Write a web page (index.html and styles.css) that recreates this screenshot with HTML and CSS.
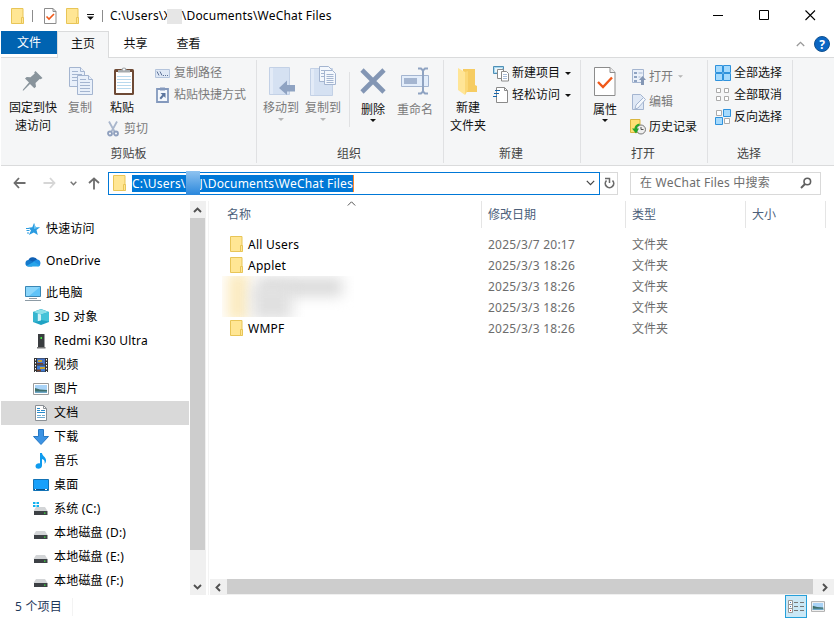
FILE: index.html
```html
<!DOCTYPE html>
<html lang="zh-CN">
<head>
    <meta charset="UTF-8">
    <title>WeChat Files</title>
    <link rel="stylesheet" href="styles.css">
</head>
<body>
    <!-- Shared icons -->
    <svg class="sprite" width="0" height="0">
        <symbol id="folder" viewBox="0 0 14 16">
            <path d="M.5.5h11.500v15H.5z" fill="#ffe694" stroke="#e8c557"/>
            <path d="M10.500 15.500V9.500h2v6z" fill="#ffe694" stroke="#e8c557"/>
        </symbol>
        <symbol id="drive" viewBox="0 0 16 16">
            <path d="M3 6h9l2.500 4h-14z" fill="#d3d5d7"/>
            <path d="M1 10h13.500v4H1z" fill="#3d4145"/>
            <path d="M11 11.500h1.500v1.200H11z" fill="#3fe03f"/>
        </symbol>
        <symbol id="picture" viewBox="0 0 16 12">
            <path d="M.5.5h15v11H.5z" fill="#fff" stroke="#9a9a9a"/>
            <path d="M2 2h12v8H2z" fill="#a9d3f7"/>
            <path d="M2 5l5 1.500 7 .5v3H2z" fill="#3f6f6b"/>
            <path d="M2 8.500h12V10H2z" fill="#6fa8c8"/>
        </symbol>
        <symbol id="check-page" viewBox="0 0 22 29">
            <path d="M.5.5h15.500l5 5v23H.5z" fill="#fff" stroke="#8c8c8c"/>
            <path d="M16 .5v5h5" fill="#eee" stroke="#8c8c8c"/>
            <path d="M4 15l5 5L18 10.500" fill="none" stroke="#f0591a" stroke-width="2.400"/>
        </symbol>
        <symbol id="down" viewBox="0 0 6 3"><path d="M0 0h6L3 3z" fill="currentColor"/></symbol>
    </svg>

    <div class="window">
        <header class="titlebar">
            <svg class="t-folder" width="14" height="16"><use href="#folder"/></svg>
            <i class="t-line"></i>
            <svg class="t-check" width="13" height="16" viewBox="0 0 13 16">
                <path d="M.5.5h8.500l3 3v12H.5z" fill="#fff" stroke="#8c8c8c"/>
                <path d="M9 .5v3h3" fill="none" stroke="#8c8c8c"/>
                <path d="M2.500 8.500l2.500 2.500 5-5" fill="none" stroke="#f0591a" stroke-width="1.600"/>
            </svg>
            <svg class="t-folder2" width="14" height="16"><use href="#folder"/></svg>
            <svg class="t-more" width="7" height="6" viewBox="0 0 7 6"><path d="M0 0h7v1H0zM0 2.500h7L3.500 6z" fill="#111"/></svg>
            <i class="t-line"></i>
            <span class="t-text">C:\Users\X<span class="mask"></span>\Documents\WeChat Files</span>
            <div class="win-buttons">
                <svg width="11" height="11" viewBox="0 0 11 11"><path d="M0 5.500h10" stroke="#000"/></svg>
                <svg width="11" height="11" viewBox="0 0 11 11"><path d="M.5.5h9v9H.5z" fill="none" stroke="#000"/></svg>
                <svg width="11" height="11" viewBox="0 0 11 11"><path d="M.5.5l9.500 9.500M10 .5L.5 10" stroke="#000" stroke-width="1.100"/></svg>
            </div>
        </header>

        <nav class="tabs">
            <span class="tab file">文件</span>
            <span class="tab active">主页</span>
            <span class="tab">共享</span>
            <span class="tab">查看</span>
            <svg class="collapse" width="9" height="6" viewBox="0 0 9 6"><path d="M.8 5L4.500 1.300 8.200 5" fill="none" stroke="#999" stroke-width="1.300"/></svg>
            <svg class="help" width="16" height="16" viewBox="0 0 16 16">
                <circle cx="8" cy="8" r="7.500" fill="#0b66c3" stroke="#12518f"/>
                <text x="8" y="12.500" text-anchor="middle" class="help-mark">?</text>
            </svg>
        </nav>

        <div class="ribbon">
            <section class="group clipboard">
                <div class="tools">
                    <div class="big pin">
                        <svg width="22" height="22" viewBox="0 0 22 22"><path d="M13.500 1l7 7-1.800 1.300-1-.4-4.200 4.200.5 3.600-1.700 1.500-4.300-4.300L2 20 .8 21 1 19.500l6-7-4-4 1.700-1.600 3.800.4 4.200-3.800-.5-1z" fill="#89949c"/></svg>
                        <span>固定到快<br>速访问</span>
                    </div>
                    <div class="big copy dim">
                        <svg width="26" height="30" viewBox="0 0 26 30" fill="#e9f0fa" stroke="#a4b5d0">
                            <path d="M1.500 1.500h11l4 4v15h-15z"/><path d="M12.500 1.500v4h4M4 8.500h10M4 11.500h10M4 14.500h10M4 5.500h6"/>
                            <path d="M9.500 9.500h11l4 4v15h-15z"/><path d="M20.500 9.500v4h4M12 16.500h10M12 19.500h10M12 22.500h10M12 25.500h10M12 13.500h6"/>
                        </svg>
                        <span>复制</span>
                    </div>
                    <div class="paste-col">
                        <div class="big paste">
                            <svg width="22" height="30" viewBox="0 0 22 30">
                                <rect x="1" y="3" width="20" height="26" rx="1.500" fill="#6e4a35"/>
                                <path d="M3 6h16v21H3z" fill="#fff"/>
                                <path d="M4 10.500h14M4 13.500h14M4 16.500h14M4 19.500h14M4 22.500h14" stroke="#b9d9ee"/>
                                <path d="M5 6.500V4h3.500a2.500 2.500 0 0 1 5 0H17v2.500z" fill="#a6abae"/><circle cx="11" cy="3.500" r="1" fill="#fff"/>
                            </svg>
                            <span>粘贴</span>
                        </div>
                        <div class="row cut dim">
                            <svg width="12" height="16" viewBox="0 0 12 16" fill="none" stroke="#8fa0be" stroke-width="1.800">
                                <path d="M2 .5l5.500 10M10 .5l-5.500 10" stroke="#a9b6cc"/><circle cx="3" cy="12.500" r="2"/><circle cx="9" cy="12.500" r="2"/>
                            </svg>
                            <span>剪切</span>
                        </div>
                    </div>
                    <div class="stack dim">
                        <div class="row">
                            <svg width="15" height="9" viewBox="0 0 15 9"><path d="M.5.5h14v8H.5z" fill="#dfe8f5" stroke="#b4c4dc"/><path d="M2 2.500l2 4M5 2.500l2 4M8 6.500h1M10 6.500h1M12 6.500h1" stroke="#5f7398"/></svg>
                            <span>复制路径</span>
                        </div>
                        <div class="row">
                            <svg width="15" height="16" viewBox="0 0 15 16"><path d="M2 2h11v13H2z" fill="#f4f8fd" stroke="#8499bd" stroke-width="1.800"/><path d="M5 .5h5v3H5z" fill="#8499bd"/><path d="M5.500 6H10.500v5L8.800 9.300 6 12.500 4.500 11l2.800-3.300z" fill="#5d769f"/></svg>
                            <span>粘贴快捷方式</span>
                        </div>
                    </div>
                </div>
                <div class="caption">剪贴板</div>
            </section>

            <section class="group organize">
                <div class="tools">
                    <div class="big dim move">
                        <svg width="28" height="30" viewBox="0 0 28 30"><path d="M2.500 1.500h20v27h-20z" fill="#d5e1f2" stroke="#c3d1e6"/><path d="M3 2h3v26H3z" fill="#e3ebf7"/><path d="M12 22l8-7.500V19h8v6.500h-8V29z" fill="#8fa3c2"/></svg>
                        <span>移动到</span>
                        <svg class="arrow" width="6" height="3"><use href="#down"/></svg>
                    </div>
                    <div class="big dim move">
                        <svg width="28" height="32" viewBox="0 0 28 32"><path d="M1.500 3.500h22v27h-22z" fill="#d5e1f2" stroke="#c3d1e6"/><path d="M2 4h3v26H2z" fill="#e3ebf7"/>
                            <g fill="#f4f8fd" stroke="#a4b5d0"><path d="M10.500 1.500h9l3 3v12h-12z"/><path d="M12 5.500h5M12 8.500h5M12 11.500h5"/><path d="M15.500 5.500h8l3 3v11h-11z"/><path d="M17.500 9.500h7M17.500 11.500h7M17.500 13.500h7M17.500 15.500h7M17.500 17.500h7"/></g></svg>
                        <span>复制到</span>
                        <svg class="arrow" width="6" height="3"><use href="#down"/></svg>
                    </div>
                    <i class="divider"></i>
                    <div class="big delete">
                        <svg width="28" height="28" viewBox="0 0 28 28"><path d="M3 3l22 22M25 3L3 25" stroke="#8396b4" stroke-width="4.600"/></svg>
                        <span>删除</span>
                        <svg class="arrow" width="6" height="3"><use href="#down"/></svg>
                    </div>
                    <div class="big dim rename">
                        <svg width="28" height="28" viewBox="0 0 28 28"><path d="M.5 8.500h27v11H.5z" fill="#e3edfa" stroke="#a4b5d0"/><path d="M3 11h13v6H3z" fill="#a4b5d0"/><path d="M17 1.500h3l2 2 2-2h3M17 26.500h3l2-2 2 2h3M22 3v22" fill="none" stroke="#8fa3c2" stroke-width="2"/></svg>
                        <span>重命名</span>
                    </div>
                </div>
                <div class="caption">组织</div>
            </section>

            <section class="group create">
                <div class="tools">
                    <div class="big newfolder">
                        <svg width="22" height="30" viewBox="0 0 22 30"><path d="M6 3h12v16l2 1v6H6z" fill="#f6cc62"/><path d="M1 2l7 4v23l-7-5z" fill="#ffe596"/><path d="M8 6l3-1v19l-3 5z" fill="#fbd877"/></svg>
                        <span>新建<br>文件夹</span>
                    </div>
                    <div class="stack">
                        <div class="row">
                            <svg width="16" height="17" viewBox="0 0 16 17"><path d="M.5 1.500h10v7H.5z" fill="#a9d8f0" stroke="#4f8fb5"/><path d="M2 3h7v4H2z" fill="#eaf6fb"/><path d="M4.500 4.500h6v9h-6z" fill="#fff" stroke="#8a8a8a"/><path d="M8.500 6.500h5l2 2v7.500h-7z" fill="#fff" stroke="#8a8a8a"/><path d="M10 9.500h4M10 11.500h4M10 13.500h4" stroke="#a9bdd9"/></svg>
                            <span>新建项目</span>
                            <svg class="side" width="6" height="3"><use href="#down"/></svg>
                        </div>
                        <div class="row">
                            <svg width="16" height="16" viewBox="0 0 16 16"><path d="M3.500.5h8l3 3v12h-11z" fill="#fff" stroke="#8a8a8a"/><path d="M11.500.5v3h3" fill="none" stroke="#8a8a8a"/><path d="M2 3.500h5M1 6.500h5M0 9.500h4" stroke="#1767ad" stroke-width="1.200"/></svg>
                            <span>轻松访问</span>
                            <svg class="side" width="6" height="3"><use href="#down"/></svg>
                        </div>
                    </div>
                </div>
                <div class="caption">新建</div>
            </section>

            <section class="group open">
                <div class="tools">
                    <div class="big props">
                        <svg width="22" height="29"><use href="#check-page"/></svg>
                        <span>属性</span>
                        <svg class="arrow" width="6" height="3"><use href="#down"/></svg>
                    </div>
                    <div class="stack">
                        <div class="row dim">
                            <svg width="16" height="16" viewBox="0 0 16 16"><path d="M2.500.5h11v13h-11z" fill="#eaf0f9" stroke="#a4b5d0"/><path d="M4 3h3v2H4zM4 7h3v2H4zM4 11h3v2H4z" fill="#8fa3c2"/><path d="M8.500 4h4M8.500 8h2" stroke="#a4b5d0"/><path d="M12.500 7l3.500 4h-2v5h-3v-5H9z" fill="#8396b4"/></svg>
                            <span>打开</span>
                            <svg class="side" width="5" height="3"><use href="#down"/></svg>
                        </div>
                        <div class="row dim">
                            <svg width="16" height="16" viewBox="0 0 16 16"><path d="M2.500.5h8l3 3v12h-11z" fill="#dfe8f5" stroke="#a4b5d0"/><path d="M5 15l1-4 7.500-7.500 2 2L8 14z" fill="#f4f8fd" stroke="#a4b5d0"/></svg>
                            <span>编辑</span>
                        </div>
                        <div class="row">
                            <svg width="16" height="17" viewBox="0 0 16 17"><path d="M.5 1.500h9.500v13H.5z" fill="#ffe073" stroke="#d9b640"/><circle cx="11" cy="11.500" r="4.500" fill="#eee" stroke="#777"/><path d="M11 9v2.500h2.500" fill="none" stroke="#555"/><path d="M9.500 5.500C6 6 4.500 8.500 4.500 10.500H2l4 5 3-5H7c0-1.800 1-2.500 2.500-3z" fill="#27a52b"/></svg>
                            <span>历史记录</span>
                        </div>
                    </div>
                </div>
                <div class="caption">打开</div>
            </section>

            <section class="group select">
                <div class="tools">
                    <div class="stack">
                        <div class="row">
                            <svg width="16" height="16" viewBox="0 0 16 16" fill="#a5dafd" stroke="#2f92dc"><path d="M.5.500h7v7H.5zM8.500.5h7v7h-7zM.5 8.500h7v7h-7zM8.500 8.500h7v7h-7z"/></svg>
                            <span>全部选择</span>
                        </div>
                        <div class="row">
                            <svg width="16" height="16" viewBox="0 0 16 16" fill="#fff" stroke="#ababab"><path d="M1.500 1.500h4v4h-4zM9.500 1.500h4v4h-4zM1.500 9.500h4v4h-4zM9.500 9.500h4v4h-4z"/></svg>
                            <span>全部取消</span>
                        </div>
                        <div class="row">
                            <svg width="16" height="16" viewBox="0 0 16 16"><path d="M1.500 1.500h5v5h-5zM9.500 9.500h5v5h-5z" fill="#fff" stroke="#ababab"/><path d="M8.500.5h7v7h-7zM.5 8.500h7v7h-7z" fill="#a5dafd" stroke="#2f92dc"/></svg>
                            <span>反向选择</span>
                        </div>
                    </div>
                </div>
                <div class="caption">选择</div>
            </section>
        </div>

        <div class="navbar">
            <svg class="back" width="13" height="12" viewBox="0 0 13 12"><path d="M6 1L1.500 6 6 11M1.500 6H12.500" fill="none" stroke="#6d6d6d" stroke-width="1.800"/></svg>
            <svg class="forward" width="13" height="12" viewBox="0 0 13 12"><path d="M7 1l4.500 5L7 11M11.500 6H.5" fill="none" stroke="#d6d6d6" stroke-width="1.800"/></svg>
            <svg class="recent" width="7" height="5" viewBox="0 0 7 5"><path d="M.7.7l2.800 3 2.800-3" fill="none" stroke="#777" stroke-width="1.500"/></svg>
            <svg class="up" width="12" height="13" viewBox="0 0 12 13"><path d="M1 6l5-4.500L11 6M6 1.500v11" fill="none" stroke="#6d6d6d" stroke-width="1.800"/></svg>
            <div class="address">
                <svg width="14" height="16"><use href="#folder"/></svg>
                <span class="path">C:\Users\<span class="mask"></span>J\Documents\WeChat Files</span>
                <svg class="drop" width="9" height="6" viewBox="0 0 9 6"><path d="M.8.8l3.700 3.900L8.200.8" fill="none" stroke="#444" stroke-width="1.200"/></svg>
            </div>
            <div class="refresh">
                <svg width="11" height="12" viewBox="0 0 11 12"><path d="M2.500 3.500A4.200 4.200 0 1 0 8.500 3.500" fill="none" stroke="#6a6a6a" stroke-width="1.700"/><path d="M1 1.500h4.500V6" fill="none" stroke="#6a6a6a" stroke-width="1.500"/></svg>
            </div>
            <div class="search">
                <span>在 WeChat Files 中搜索</span>
                <svg width="12" height="12" viewBox="0 0 12 12"><circle cx="7.300" cy="4.500" r="3.300" fill="none" stroke="#5f5f5f" stroke-width="1.600"/><path d="M5 7L1 11" stroke="#5f5f5f" stroke-width="2"/></svg>
            </div>
        </div>

        <div class="body">
            <aside class="tree">
                <div class="node root">
                    <svg width="16" height="16" viewBox="0 0 16 16"><path d="M9 2l1.600 4 4.400.3-3.500 2.700 1.300 5-4-2.500-5 2.500 2.200-4.500-2.500-2.700 3.800-.5z" fill="#2a9be0"/><path d="M9 2l1.600 4 4.400.3-6 1.700z" fill="#6cc4f2"/><path d="M1 7.500h3M1.500 9.500h3M2 12h2" stroke="#2a9be0"/></svg>
                    <span>快速访问</span>
                </div>
                <div class="node root">
                    <svg width="16" height="16" viewBox="0 0 16 16"><path d="M3 8a5.200 5.200 0 0 1 9.600-1L8 11z" fill="#0f5fb4"/><path d="M3.500 13.500a3.300 3.300 0 0 1 .5-6.600l6 2.600-3 4z" fill="#1479cc"/><path d="M8 8.500l4-2a3.600 3.600 0 0 1 1 7z" fill="#1f8fe4"/><path d="M1.500 12.700L9 8.800l6.200 3.700a3 3 0 0 1-2.400 1H3.500a4 4 0 0 1-2-.8z" fill="#28a5ea"/></svg>
                    <span>OneDrive</span>
                </div>
                <div class="node root">
                    <svg width="16" height="16" viewBox="0 0 16 16"><path d="M.5 1.500h15v10H.5z" fill="#5fc3f8" stroke="#3a87b5"/><path d="M1 2h14L4 11H1z" fill="#8bd6fb"/><path d="M4 13.500h8M0 15.500h16" stroke="#8d9ba5"/></svg>
                    <span>此电脑</span>
                </div>
                <div class="node">
                    <svg width="16" height="16" viewBox="0 0 16 16"><path d="M8 0l8 3v10l-8 3-8-3V3z" fill="#1fa3c4"/><path d="M0 3l8 2.500L16 3 8 .2z" fill="#8ce0e9"/><path d="M4.500 4.500L8 5.500v6l-3.500.8z" fill="#d3f2f7"/><path d="M8 5.500L16 3v9.500l-8-1.500z" fill="#45c3d8"/><path d="M0 3l4.500 1.500v8L0 13z" fill="#35b5cf"/></svg>
                    <span>3D 对象</span>
                </div>
                <div class="node">
                    <svg width="16" height="16" viewBox="0 0 16 16"><path d="M5 1h6.500v13H5z" fill="#3a3d40"/><path d="M4 14h8.500v1.500H4z" fill="#777"/><path d="M7.500 4H9v2H7.500z" fill="#43ea43"/></svg>
                    <span>Redmi K30 Ultra</span>
                </div>
                <div class="node">
                    <svg width="16" height="16" viewBox="0 0 16 16"><path d="M1 1h14v14H1z" fill="#343434"/><path d="M4 1.500h8v6H4z" fill="#4673c4"/><path d="M4 8.500h8v6H4z" fill="#3f7cd6"/><path d="M5 3h4v2H5zM7 10h5v2H7z" fill="#c6a334"/><path d="M4 6h6v1.500H4zM4 12.500h4v2H4z" fill="#70412d"/><path d="M2.500 2v13M13.500 2v13" stroke="#fff" stroke-dasharray="1.500 1.500"/></svg>
                    <span>视频</span>
                </div>
                <div class="node"><svg width="16" height="12"><use href="#picture"/></svg><span>图片</span></div>
                <div class="node current">
                    <svg width="16" height="16" viewBox="0 0 16 16"><path d="M2.500.5h8l3 3v12h-11z" fill="#fff" stroke="#8a8f94"/><path d="M10.500.5v3h3" fill="none" stroke="#8a8f94"/><path d="M4 5.500h3M8 5.500h4M4 7.500h8M4 3.500h3" stroke="#288acb"/><path d="M4 10.500h4M4 12.500h8M9 10.500h3" stroke="#6fa9cf"/></svg>
                    <span>文档</span>
                </div>
                <div class="node"><svg width="16" height="16" viewBox="0 0 16 16"><path d="M5.500.5h5v7h5L8 15.500.5 7.500h5z" fill="#3c93e4" stroke="#2678c4"/></svg><span>下载</span></div>
                <div class="node"><svg width="16" height="16" viewBox="0 0 16 16"><path d="M7 0h2c0 3 4.500 4 4 8-.3 2-1 2.500-1.500 3 .7-3-.5-4.500-2.500-5v6.500c0 4-6.500 4.500-6.500.8C2.500 11 5 10 7 10.500z" fill="#0f9bee"/></svg><span>音乐</span></div>
                <div class="node"><svg width="16" height="16" viewBox="0 0 16 16"><path d="M.5 2.500h15v11H.5z" fill="#18a0fb" stroke="#1272b5"/><path d="M1 12.500h14" stroke="#0b4f86"/><path d="M2 12.500h1M12 12.500h2" stroke="#fff"/></svg><span>桌面</span></div>
                <div class="node"><svg width="16" height="16" viewBox="0 0 16 16"><use href="#drive"/><path d="M0 1h2.500v2H0zM3.500 1H6v2H3.500zM0 4h2.500v2H0zM3.500 4H6v2H3.500z" fill="#12b1ef"/></svg><span>系统 (C:)</span></div>
                <div class="node"><svg width="16" height="16"><use href="#drive"/></svg><span>本地磁盘 (D:)</span></div>
                <div class="node"><svg width="16" height="16"><use href="#drive"/></svg><span>本地磁盘 (E:)</span></div>
                <div class="node"><svg width="16" height="16"><use href="#drive"/></svg><span>本地磁盘 (F:)</span></div>
            </aside>
            <div class="vscroll">
                <svg width="9" height="6" viewBox="0 0 9 6"><path d="M1 5l3.500-3.500L8 5" fill="none" stroke="#505050" stroke-width="1.900"/></svg>
                <div class="thumb"></div>
                <svg width="9" height="6" viewBox="0 0 9 6"><path d="M1 1l3.500 3.500L8 1" fill="none" stroke="#505050" stroke-width="1.900"/></svg>
            </div>
            <main class="files">
                <div class="columns">
                    <div class="name">名称<svg class="sort" width="9" height="5" viewBox="0 0 9 5"><path d="M.8 4.500L4.500.8l3.700 3.700" fill="none" stroke="#555"/></svg></div>
                    <div class="date">修改日期</div>
                    <div class="type">类型</div>
                    <div class="size">大小</div>
                </div>
                <div class="list">
                    <div class="item"><div class="name"><svg width="14" height="16"><use href="#folder"/></svg>All Users</div><div class="date">2025/3/7 20:17</div><div class="type">文件夹</div></div>
                    <div class="item"><div class="name"><svg width="14" height="16"><use href="#folder"/></svg>Applet</div><div class="date">2025/3/3 18:26</div><div class="type">文件夹</div></div>
                    <div class="item"><div class="name"></div><div class="date">2025/3/3 18:26</div><div class="type">文件夹</div></div>
                    <div class="item"><div class="name"></div><div class="date">2025/3/3 18:26</div><div class="type">文件夹</div></div>
                    <div class="item"><div class="name"><svg width="14" height="16"><use href="#folder"/></svg>WMPF</div><div class="date">2025/3/3 18:26</div><div class="type">文件夹</div></div>
                    <div class="smudge"><i class="s-yellow"></i><i class="s-gray"></i><i class="s-gray2"></i></div>
                </div>
                <div class="hscroll">
                    <svg width="6" height="9" viewBox="0 0 6 9"><path d="M5 1L1.500 4.500 5 8" fill="none" stroke="#505050" stroke-width="1.900"/></svg>
                    <div class="thumb"></div>
                    <svg width="6" height="9" viewBox="0 0 6 9"><path d="M1 1l3.500 3.500L1 8" fill="none" stroke="#505050" stroke-width="1.900"/></svg>
                </div>
            </main>
        </div>

        <footer class="status">
            <span class="count">5 个项目</span>
            <div class="view on">
                <svg width="16" height="13" viewBox="0 0 16 13"><path d="M.5.5h4v12h-4zM.5 4.500h4M.5 8.500h4" fill="#fff" stroke="#979797"/><path d="M6 2.500h4M12 2.500h4M6 6.500h4M12 6.500h4M6 10.500h4M12 10.500h4" stroke="#777"/><path d="M2 2h1v1H2z" fill="#487cb8"/><path d="M2 6h1v1H2z" fill="#487cb8"/><path d="M2 10h1v1H2z" fill="#c33"/></svg>
            </div>
            <div class="view"><svg width="14" height="11"><use href="#picture"/></svg></div>
        </footer>
    </div>
</body>
</html>
```
FILE: styles.css
```css
body {
    margin: 0;
    background-color: #fff;
    font-family: "Noto Sans", "Noto Sans CJK SC", sans-serif;
    font-size: 12px;
    line-height: 18px;
    color: #111;
    overflow: hidden;
}

svg {
    display: block;
    flex: none;
}

.sprite {
    position: absolute;
}

.window {
    display: flex;
    flex-direction: column;
    width: 834px;
    height: 619px;
    box-sizing: border-box;
    padding-left: 1px;
    white-space: nowrap;
}

/* Title bar */
.titlebar {
    display: flex;
    align-items: center;
    height: 31px;
    padding-left: 10px;
}

.t-line {
    width: 1px;
    height: 12px;
    background-color: #8c8c8c;
}

.t-folder {
    margin-right: 7px;
}

.t-check {
    margin: 0 9px 0 11px;
}

.t-more {
    margin: 3px 8px 0 7px;
}

.t-text {
    display: flex;
    margin-left: 7px;
    letter-spacing: 0.2px;
    color: #000;
}

.t-text .mask {
    width: 15px;
    height: 15px;
    margin: 2px 0 0 -4px;
    background-color: #e6e6e6;
}

.win-buttons {
    display: flex;
    gap: 35px;
    margin-left: auto;
    margin-right: 18px;
}

/* Tabs */
.tabs {
    display: flex;
    align-items: center;
    height: 26px;
    border-bottom: 1px solid #dadbdc;
}

.tab {
    width: 53px;
    height: 26px;
    line-height: 25px;
    text-align: center;
}

.tab.file {
    align-self: flex-start;
    width: 56px;
    height: 23px;
    line-height: 24px;
    background-color: #0063b1;
    color: #fff;
}

.tab.active {
    width: 50px;
    height: 26px;
    margin-bottom: -1px;
    border: 1px solid #dadbdc;
    border-bottom: 0;
    background-color: #f5f6f7;
    line-height: 24px;
}

.collapse {
    margin-left: auto;
}

.help {
    margin: 0 4px 0 9px;
}

.help-mark {
    fill: #fff;
    font-size: 12px;
    font-weight: bold;
}

/* Ribbon */
.ribbon {
    display: flex;
    height: 107px;
    background-color: #f5f6f7;
    border-bottom: 1px solid #dadbdc;
}

.group {
    display: flex;
    flex-direction: column;
    box-sizing: border-box;
    height: 103px;
    margin-top: 2px;
    border-right: 1px solid #e0e1e3;
}

.clipboard { width: 256px; }
.organize { width: 187px; }
.create { width: 137px; }
.open { width: 127px; }
.select { width: 85px; }

.tools {
    display: flex;
    height: 85px;
}

.caption {
    padding-right: 2px;
    text-align: center;
    color: #444;
}

.clipboard .caption {
    padding-right: 0;
}

.big {
    display: flex;
    flex-direction: column;
    align-items: center;
    width: 42px;
    text-align: center;
}

.big > svg:first-child {
    margin: 6px 0;
}

.big.pin {
    width: 50px;
    margin-left: 7px;
}

.big.pin > svg:first-child {
    margin: 10px 0 7px;
}

.big.copy {
    margin-left: 1px;
}

.big.copy > svg:first-child,
.big.paste > svg:first-child {
    margin: 6px 0 3px;
}

.big.copy > svg:first-child {
    margin-left: 2px;
}

.big.paste > svg:first-child {
    margin-left: 3px;
}

.big .arrow {
    margin-top: 1px;
}

.big.move > svg:first-child {
    height: 32px;
    margin: 5px 0 2px;
}

.big.delete > svg:first-child,
.big.rename > svg:first-child {
    margin: 7px 0 6px;
}

.big.delete .arrow,
.big.props .arrow {
    margin-top: 0;
}

.big.newfolder > svg:first-child {
    margin: 6px 0 3px;
}

.big.props > svg:first-child {
    margin: 7px 0 5px;
}

.dim {
    color: #7a7a7a;
}

.dim .arrow,
.dim .side {
    color: #b5b5b5;
}

.paste-col {
    width: 54px;
}

.row {
    display: flex;
    align-items: center;
    height: 22px;
    gap: 3px;
}

.cut {
    gap: 5px;
    padding-left: 6px;
    height: 24px;
}

.clipboard .stack .row {
    gap: 4px;
}

.stack {
    padding-top: 2px;
}

.side {
    margin-left: 2px;
}

.organize .tools {
    padding-left: 3px;
}

.divider {
    width: 1px;
    height: 55px;
    margin: 12px 2px 0 5px;
    background-color: #e0e1e3;
}

.create .tools {
    padding-left: 3px;
}

.create .stack {
    padding-left: 4px;
}

.create .side {
    margin-left: 2px;
}

.open .tools {
    padding-left: 3px;
}

.open .stack {
    padding: 4px 0 0 4px;
}

.open .row {
    height: 25px;
}

.open .side {
    margin-left: 2px;
}

.select .tools {
    padding-left: 7px;
}

/* Address bar */
.navbar {
    display: flex;
    align-items: center;
    height: 24px;
    padding: 5px 0 6px 12px;
}

.forward {
    margin-left: 17px;
}

.recent {
    margin: 0 11px 0 14px;
}

.up {
    margin-right: 8px;
}

.address,
.refresh,
.search {
    display: flex;
    align-items: center;
    box-sizing: border-box;
    height: 23px;
    border: 1px solid #d9d9d9;
}

.address {
    width: 492px;
    padding-left: 4px;
    border-color: #0078d7;
}

.path {
    display: flex;
    height: 17px;
    margin-left: 5px;
    line-height: 17px;
    letter-spacing: 0.2px;
    background-color: #0078d7;
    border-right: 1px solid #ff8728;
    color: #fff;
}

.path .mask {
    width: 14px;
    height: 24px;
    margin: -4px 0 0 0;
    background-image: linear-gradient(#8fc3f0, #2a87dc);
    z-index: 1;
}

.drop {
    margin: 0 4px 0 auto;
}

.refresh {
    width: 18px;
    padding-left: 4px;
    border-left: 0;
}

.search {
    width: 191px;
    margin-left: 12px;
    padding: 0 8px 0 9px;
    justify-content: space-between;
    letter-spacing: 0.22px;
    color: #6d6d6d;
}

/* Navigation tree */
.body {
    display: flex;
    height: 394px;
}

.tree {
    width: 188px;
    padding-top: 16px;
    margin-right: 1px;
}

.node {
    display: flex;
    align-items: center;
    height: 24px;
    padding-left: 32px;
    gap: 5px;
    letter-spacing: 0.2px;
    color: #000;
}

.node.root {
    padding-left: 24px;
    margin-bottom: 8px;
}

.node.root:nth-child(3) {
    margin-bottom: 0;
}

.current {
    background-color: #d9d9d9;
}

.vscroll {
    display: flex;
    flex-direction: column;
    align-items: flex-start;
    width: 16px;
    background-color: #f0f0f0;
}

.vscroll svg:first-child {
    margin: 6px 0 5px 3px;
}

.vscroll svg:last-child {
    margin: 34px 0 0 3px;
}

.vscroll .thumb {
    width: 15px;
    height: 332px;
    background-color: #cdcdcd;
}

/* File list */
.files {
    display: flex;
    flex-direction: column;
    flex: 1;
    margin-left: 2px;
    border-left: 1px solid #f3f3f3;
}

.columns {
    display: flex;
    height: 27px;
    color: #4c607a;
}

.columns > div {
    box-sizing: border-box;
    border-right: 1px solid #e5e5e5;
    line-height: 27px;
}

.name {
    position: relative;
    box-sizing: border-box;
    width: 273px;
    padding-left: 18px;
}

.sort {
    position: absolute;
    left: 138px;
    top: 0;
}

.date {
    box-sizing: border-box;
    width: 144px;
    padding-left: 6px;
}

.type {
    box-sizing: border-box;
    width: 120px;
    padding-left: 6px;
}

.size {
    width: 80px;
    padding-left: 6px;
}

.list {
    position: relative;
    flex: 1;
    padding-top: 6px;
}

.item {
    display: flex;
    height: 21px;
    line-height: 21px;
    color: #6d6d6d;
}

.item .date {
    letter-spacing: 0.22px;
}

.item .name {
    display: flex;
    align-items: center;
    gap: 4px;
    padding-left: 21px;
    letter-spacing: 0.25px;
    color: #000;
}

.item svg {
    margin-bottom: 1px;
}

/* Blurred names */
.smudge {
    position: absolute;
    left: 13px;
    top: 48px;
    width: 132px;
    height: 41px;
    overflow: hidden;
}

.smudge i {
    position: absolute;
    filter: blur(7px);
}

.s-yellow {
    left: 6px;
    top: -4px;
    width: 20px;
    height: 50px;
    background-color: #fbe9bc;
}

.s-gray {
    left: 36px;
    top: 2px;
    width: 84px;
    height: 18px;
    background-color: #d9d9d9;
}

.s-gray2 {
    left: 30px;
    top: 10px;
    width: 40px;
    height: 34px;
    background-color: #e0e0e0;
}

.hscroll {
    display: flex;
    align-items: center;
    height: 16px;
    margin-left: 1px;
    background-color: #f0f0f0;
}

.hscroll svg:first-child {
    margin: 0 6px 0 5px;
}

.hscroll .thumb {
    width: 586px;
    height: 15px;
    margin: 0 9px 1px 0;
    background-color: #cdcdcd;
}

/* Status bar */
.status {
    display: flex;
    align-items: flex-start;
    height: 24px;
}

.count {
    width: 57px;
    margin: 3px auto 0 0;
    padding-left: 14px;
    letter-spacing: 0.2px;
    color: #1e395b;
    border-right: 1px solid #f3f3f3;
}

.view {
    display: flex;
    align-items: center;
    justify-content: center;
    box-sizing: border-box;
    width: 22px;
    height: 23px;
    margin-right: 5px;
}

.view.on {
    margin-right: 0;
    border: 1px solid #26a0da;
    background-color: #cbe8f6;
}
```
